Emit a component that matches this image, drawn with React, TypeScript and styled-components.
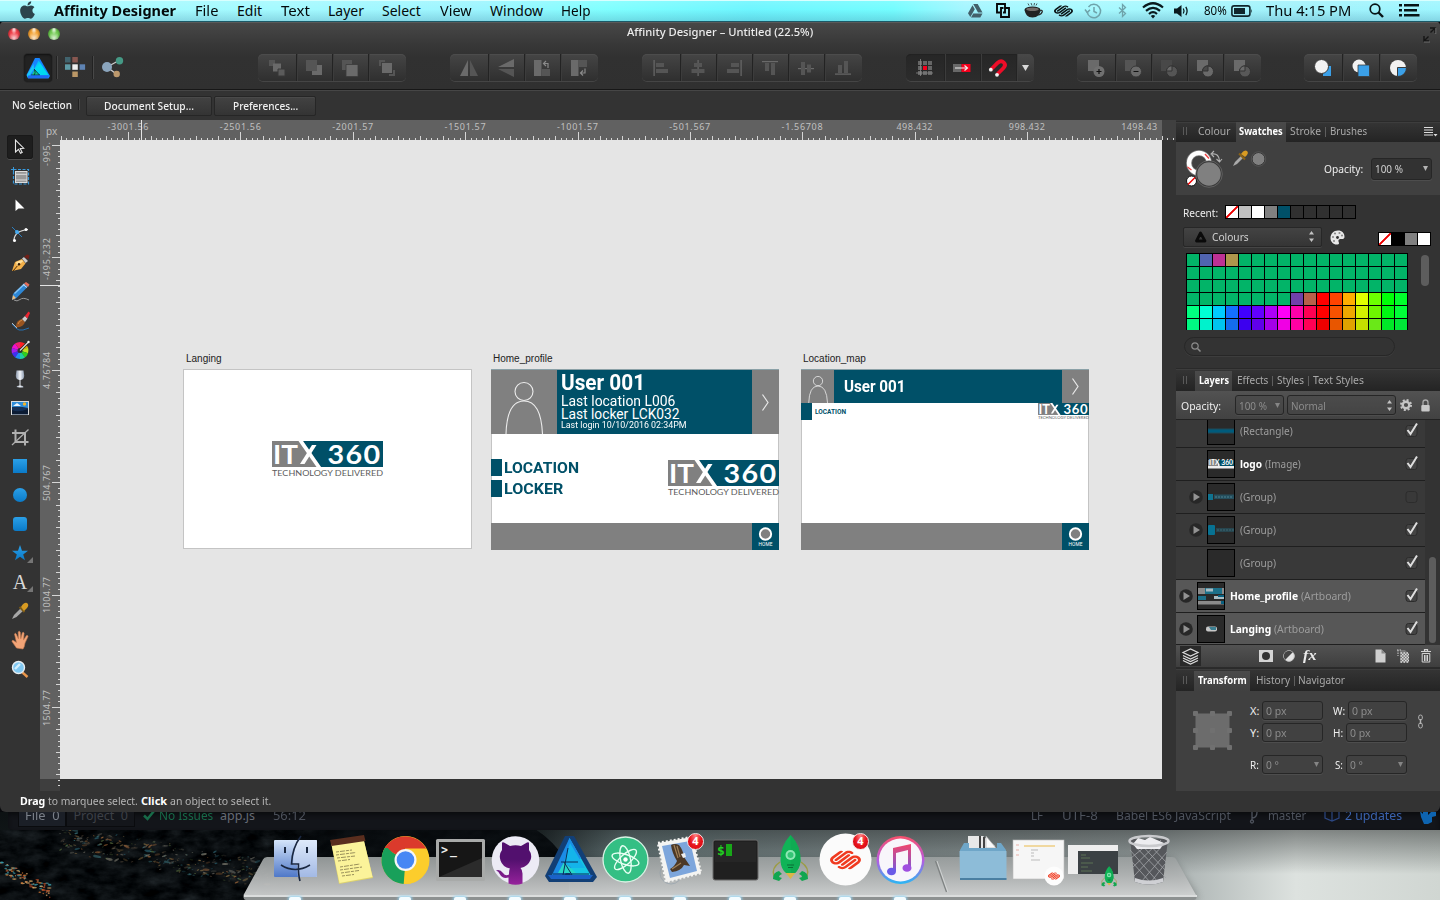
import React, { useLayoutEffect, useRef, useState } from "react";
import styled, { createGlobalStyle, css } from "styled-components";
import { SiSquarespace } from "react-icons/si";
import { FaApple } from "react-icons/fa";

const UI = `"Noto Sans", "Open Sans", sans-serif`;

const GlobalStyle = createGlobalStyle`
  * { box-sizing: border-box; }
  html, body { margin: 0; padding: 0; background: #111; }
  svg { display: block; flex: none; overflow: visible; }
`;

/* ---------- text fitted to a fixed measure ---------- */
const FitBox = styled.span<{ $w: number; $ml?: number }>`
  display: inline-block;
  flex: none;
  width: ${(p) => p.$w}px;
  margin-left: ${(p) => p.$ml ?? 0}px;
  white-space: pre;
  text-align: left;
`;
const FitInner = styled.span`
  display: inline-block;
  transform-origin: 0 50%;
`;
function Fit({ w, ml, children }: { w: number; ml?: number; children: React.ReactNode }) {
  const ref = useRef<HTMLSpanElement>(null);
  const [k, setK] = useState(1);
  useLayoutEffect(() => {
    if (ref.current) setK(w / ref.current.offsetWidth);
  }, [w]);
  return (
    <FitBox $w={w} $ml={ml}>
      <FitInner ref={ref} style={{ transform: `scaleX(${k})` }}>{children}</FitInner>
    </FitBox>
  );
}

/* ---------- page ---------- */
const Screen = styled.div`
  position: relative;
  width: 1440px;
  height: 900px;
  overflow: hidden;
  display: flex;
  flex-direction: column;
  background: #08090c;
  font-family: ${UI};
`;

/* ---------- menu bar ---------- */
const MenuBar = styled.header`
  height: 22px;
  flex: none;
  display: flex;
  align-items: center;
  padding-left: 19px;
  font-size: 14px;
  line-height: 20px;
  color: #04090b;
  border-bottom: 1px solid #1d5a68;
  box-shadow: inset 0 1px 0 #d8ffff;
  background:
    linear-gradient(180deg, rgba(255,255,255,.12), rgba(255,255,255,0) 45%, rgba(60,130,160,.28)),
    linear-gradient(90deg, #a6fbff 0, #a4faff 20%, #9df5ff 33%, #80ffff 42%, #6ef6ff 52%, #74fdff 62%, #a5f6ff 67%, #a8faff 75%, #a2f2fb 90%, #9ff6ff 100%);
`;
const MenuName = styled.span`font-weight: 700; display: flex;`;
const MenuGlyph = styled.span<{ $ml: number }>`margin-left: ${(p) => p.$ml}px; flex: none;`;
const BatteryText = styled.span`font-size: 12px; display: flex;`;

const menuItems: [string, number, number][] = [
  ["File", 23, 19], ["Edit", 25, 19], ["Text", 29, 19], ["Layer", 36, 18], ["Select", 39, 18],
  ["View", 32, 19], ["Window", 53, 18], ["Help", 30, 18],
];

const AppleMark = styled(FaApple)`
  width: 17px;
  height: 20px;
  margin-top: -1px;
  color: #2c444c;
`;
const SMark = styled(SiSquarespace).attrs({ preserveAspectRatio: "none" })<{ $w: number; $h: number }>`
  width: ${(p) => p.$w}px;
  height: ${(p) => p.$h}px;
`;

function Menus() {
  return (
    <MenuBar>
      <AppleMark />
      <MenuName><Fit w={122} ml={18}>Affinity Designer</Fit></MenuName>
      {menuItems.map(([t, w, ml]) => <Fit key={t} w={w} ml={ml}>{t}</Fit>)}
      <MenuGlyph $ml={377}>
        <svg width="15" height="14" viewBox="0 0 15 14"><path fill="#43606a" d="M5.200 0h4.500l4.800 8.500h-4.500zM4.500 1.300l2.300 4L2.300 13 0 9.200zM5.300 9.500h9.200L12.300 13.500H3z" /></svg>
      </MenuGlyph>
      <MenuGlyph $ml={13}>
        <svg width="14" height="15" viewBox="0 0 14 15" fill="none" stroke="#06090a" strokeWidth="1.900"><path d="M9 4.500V1H1v8.500h3M5 10.500V14h8V5H9.500M5 10.500V5h2.500M9 4.500v5H7" /></svg>
      </MenuGlyph>
      <MenuGlyph $ml={14}>
        <svg width="19" height="16" viewBox="0 0 19 16"><path d="M4 .5l1 2M7 0l1 2.500M10.500 0l-.5 2.500M13 .5l-1 2" stroke="#37474b" strokeWidth=".9" /><ellipse cx="8.500" cy="6.500" rx="8" ry="3" fill="#1a1c1d" /><path d="M.5 7c1 4.500 3 7.500 8 7.500S16 11.500 16.500 7z" fill="#222" /><ellipse cx="8.500" cy="6.300" rx="6.300" ry="1.800" fill="#746d6a" /><path d="M15.500 8q3-1.500 2.800.7-.6 2.600-4 3.300" fill="none" stroke="#2b2b2b" strokeWidth="1.300" /></svg>
      </MenuGlyph>
      <MenuGlyph $ml={11}><SMark $w={19} $h={14} color="#0b1416" /></MenuGlyph>
      <MenuGlyph $ml={12}>
        <svg width="17" height="16" viewBox="0 0 17 16" fill="none" stroke="#6fa3aa" strokeWidth="1.500"><path d="M2.200 9A6.700 6.700 0 1 0 3.500 4" /><path d="M9 4v4.500l3 1.500" /><path d="M0 6.500l2.300 3 2.700-2.700" /></svg>
      </MenuGlyph>
      <MenuGlyph $ml={16}>
        <svg width="9" height="15" viewBox="0 0 9 15" fill="none" stroke="#6fa3aa" strokeWidth="1.300"><path d="M1 4.500l6.500 6L4.500 13.500V1.500l3 3L1 10.500" /></svg>
      </MenuGlyph>
      <MenuGlyph $ml={15}>
        <svg width="22" height="17" viewBox="0 0 22 17" fill="none" stroke="#0a1a1e" strokeWidth="2.200"><path d="M1 5.500Q11-3 21 5.500M4 8.800q7-6 14 0M7 12q4-3.600 8 0" /><path d="M11 16.500L8.800 14q2.200-1.800 4.400 0z" fill="#0a1a1e" stroke="none" /></svg>
      </MenuGlyph>
      <MenuGlyph $ml={10}>
        <svg width="15" height="14" viewBox="0 0 15 14"><path d="M0 4.500h3L7.500 1v12L3 9.500H0z" fill="#0a1a1e" /><path d="M9.300 4.500q1.500 2.500 0 5M11.800 2.800q2.600 4.200 0 8.400" fill="none" stroke="#0a1a1e" strokeWidth="1.300" /></svg>
      </MenuGlyph>
      <BatteryText><Fit w={23} ml={15}>80%</Fit></BatteryText>
      <MenuGlyph $ml={4}>
        <svg width="22" height="12" viewBox="0 0 22 12"><rect x=".9" y=".9" width="18" height="10.200" rx="2.200" fill="none" stroke="#10262b" strokeWidth="1.600" /><rect x="3" y="3" width="11" height="6" fill="#10262b" /><path d="M20.300 3.700q1.600 2.300 0 4.600z" fill="#10262b" /></svg>
      </MenuGlyph>
      <Fit w={85} ml={13}>Thu 4:15 PM</Fit>
      <MenuGlyph $ml={18}>
        <svg width="15" height="15" viewBox="0 0 15 15" fill="none" stroke="#081417"><circle cx="6" cy="6" r="4.800" strokeWidth="1.700" /><path d="M9.500 9.500L14 14" strokeWidth="2.400" /></svg>
      </MenuGlyph>
      <MenuGlyph $ml={15}>
        <svg width="21" height="13" viewBox="0 0 21 13" fill="#081417"><path d="M0 0h3v2.600H0zM5 0h15v2.600H5zM0 5h3v2.600H0zM5 5h13v2.600H5zM0 10h3v2.600H0zM5 10h15.500v2.600H5z" /></svg>
      </MenuGlyph>
    </MenuBar>
  );
}

/* ---------- window ---------- */
const Window = styled.section`
  position: relative;
  z-index: 2;
  flex: none;
  height: 790px;
  width: 1440px;
  display: flex;
  flex-direction: column;
  overflow: hidden;
  border-radius: 4px 4px 6px 6px;
  background: #333;
  color: #eee;
  font-size: 11px;
`;
const TitleBar = styled.div`
  height: 22px;
  flex: none;
  display: flex;
  align-items: center;
  padding: 2px 4px 0 8px;
  background: linear-gradient(#484848, #383838);
  box-shadow: inset 0 1px 0 #5a5a5a;
  font-size: 11.500px;
  font-weight: 500;
  color: #ececec;
`;
const TitleText = styled.span`display: flex; padding-bottom: 5px;`;
const Lights = styled.div`display: flex; gap: 8px; width: 619px;`;
const Light = styled.i<{ $c: string; $d: string }>`
  width: 12px;
  height: 12px;
  border-radius: 50%;
  background: radial-gradient(circle at 50% 85%, rgba(255,255,255,.75), transparent 50%), radial-gradient(ellipse at 50% 12%, rgba(255,255,255,.9), transparent 34%), radial-gradient(circle, ${(p) => p.$c} 40%, ${(p) => p.$d});
`;
const FullScreen = styled.span`margin-left: 610px;`;

const Toolbar = styled.div`
  height: 45px;
  flex: none;
  display: flex;
  align-items: center;
  padding: 2px 0 0 24px;
  background: linear-gradient(#383838, #313131 30%, #303030);
`;
const Persona = styled.div<{ $on?: boolean; $w: number }>`
  width: ${(p) => p.$w}px;
  height: 28px;
  border-radius: 4px;
  display: flex;
  align-items: center;
  justify-content: center;
  ${(p) => p.$on && css`background: #222; box-shadow: inset 0 1px 2px #111, 0 0 0 1px #2a2a2a;`}
`;
const VLine = styled.i<{ $l: number; $r?: number; $h: number }>`
  width: 2px;
  height: ${(p) => p.$h}px;
  margin: 0 ${(p) => p.$r ?? 0}px 0 ${(p) => p.$l}px;
  background: linear-gradient(90deg, #222 50%, #484848 50%);
`;
const Group = styled.div<{ $ml: number; $dark?: boolean }>`
  height: 27px;
  margin-left: ${(p) => p.$ml}px;
  display: flex;
  border-radius: 5px;
  background: ${(p) => (p.$dark ? "linear-gradient(#262626,#2c2c2c)" : "linear-gradient(#454545,#2f2f2f)")};
  box-shadow: 0 1px 0 #454545, inset 0 1px 0 ${(p) => (p.$dark ? "#222" : "#4c4c4c")};
  overflow: hidden;
`;
const GBtn = styled.div<{ $w: number; $light?: boolean }>`
  width: ${(p) => p.$w}px;
  height: 27px;
  display: flex;
  align-items: center;
  justify-content: center;
  & + & { box-shadow: inset 1px 0 0 #232323, inset 2px 0 0 #3c3c3c; }
  ${(p) => p.$light && css`background: linear-gradient(#484848, #333);`}
`;

const G = "#6a6a6a";
const D = "#555";
const I = ({ children, w = 18 }: { children: React.ReactNode; w?: number }) => (
  <svg width={w} height="18" viewBox={`0 0 ${w} 18`}>{children}</svg>
);
const R = ({ x, y, w, h, f = G }: { x: number; y: number; w: number; h: number; f?: string }) => (
  <rect x={x} y={y} width={w} height={h} fill={f} />
);

function Tools() {
  return (
    <Toolbar>
      <Persona $on $w={28}>
        <svg width="24" height="22" viewBox="0 0 24 22">
          <defs><linearGradient id="af" x1="0" y1="0" x2="1" y2="1"><stop offset="0" stopColor="#1690ff" /><stop offset=".35" stopColor="#00dcf4" /><stop offset="1" stopColor="#00d8ee" /></linearGradient></defs>
          <path d="M9 1h4.500L24 19l-1.500 2.500H2L.5 18z" fill="#1784ff" />
          <path d="M7.500 7L.8 18l1.200 3 6-9z" fill="#19c8f8" />
          <path d="M12.500 3.500L22.500 18H13.500L8 12.500z" fill="url(#af)" />
          <path d="M8.500 12.500l4.500 5.500H6z" fill="#12cf8e" />
          <path d="M8 12l5.500 6M5 18h9M8.500 12.500Q10 16 8 18.500" fill="none" stroke="#0c2a33" strokeWidth=".8" />
          <path d="M2 18.500h20.500l-1 2.500H2z" fill="#1f6cf4" />
        </svg>
      </Persona>
      <VLine $l={4} $h={23} />
      <Persona $w={34}>
        <svg width="21" height="21" viewBox="0 0 21 21">
          <R x={0} y={0} w={5.500} h={5.500} f="#41636d" /><R x={7.300} y={0} w={5.500} h={5.500} f="#885750" />
          <R x={0} y={7.300} w={5.500} h={5.500} f="#5e9aa5" /><R x={7.300} y={7.300} w={5.500} h={5.500} f="#efefef" /><R x={14.600} y={7.300} w={5.500} h={5.500} f="#5e83b3" />
          <R x={7.300} y={14.500} w={5.500} h={5.500} f="#ba9767" />
        </svg>
      </Persona>
      <VLine $l={0} $h={23} />
      <Persona $w={37}>
        <svg width="22" height="21" viewBox="0 0 22 21"><path d="M5 10L17 3.500M5 10l10 7.500" stroke="#c9c9c9" strokeWidth="1.400" /><circle cx="5" cy="10" r="5" fill="#8ba5bd" /><circle cx="17.500" cy="3.700" r="3.700" fill="#459985" /><circle cx="14.700" cy="17" r="3.200" fill="#bc986c" /></svg>
      </Persona>
      <Group $ml={127}>
        <GBtn $w={38}><I><R x={1} y={1} w={6} h={6} f={D} /><R x={5} y={4.500} w={8} h={8} /><path d="M10 10h7v7h-7z" fill="#5b5b5b" stroke="#383838" /></I></GBtn>
        <GBtn $w={36}><I><path d="M7 12h3v-6h7v10H7z" fill={G} /><R x={1} y={1} w={11} h={11} f={D} /></I></GBtn>
        <GBtn $w={36}><I><R x={1} y={1} w={10} h={10} f={D} /><path d="M5 5.500h12v12H5z" fill={G} stroke="#3a3a3a" strokeWidth=".8" /></I></GBtn>
        <GBtn $w={38}><I><path d="M1 1h6v2H3v4H1zM17 17h-6v-2h4v-4h2z" fill={D} /><R x={4} y={4} w={10} h={10} /></I></GBtn>
      </Group>
      <Group $ml={44}>
        <GBtn $w={38}><I w={20}><path d="M9 1v16H1z" fill={G} /><path d="M11 1v16h8z" fill={D} /></I></GBtn>
        <GBtn $w={36}><I><path d="M17 0v8H1z" fill={G} /><path d="M17 10v8L1 10z" fill={D} /></I></GBtn>
        <GBtn $w={36}><I><R x={1} y={1} w={7.500} h={16} /><R x={9} y={10} w={8} h={7} f={D} /><path d="M11 4.500h4V9M13 2l-2.500 2.500L13 7" fill="none" stroke="#8a8a8a" strokeWidth="1.200" /></I></GBtn>
        <GBtn $w={38}><I><R x={1} y={1} w={7.500} h={16} /><R x={9} y={1} w={8} h={7} f={D} /><path d="M15 9.500V14h-4M13 11.500L10.500 14 13 16.500" fill="none" stroke="#8a8a8a" strokeWidth="1.200" /></I></GBtn>
      </Group>
      <Group $ml={44}>
        <GBtn $w={38}><I><R x={1.500} y={1} w={1.200} h={16} /><R x={4} y={4} w={8} h={4} f={D} /><R x={4} y={10} w={12} h={4} f={D} /></I></GBtn>
        <GBtn $w={36}><I><R x={8.500} y={1} w={1.200} h={16} /><R x={5} y={4} w={8} h={4} f={D} /><R x={2.500} y={10} w={13} h={4} f={D} /></I></GBtn>
        <GBtn $w={36}><I><R x={15.500} y={1} w={1.200} h={16} /><R x={6} y={4} w={8} h={4} f={D} /><R x={2} y={10} w={12} h={4} f={D} /></I></GBtn>
        <GBtn $w={36}><I><R x={1} y={2} w={16} h={1.200} /><R x={4} y={4} w={4} h={8} f={D} /><R x={10} y={4} w={4} h={12} f={D} /></I></GBtn>
        <GBtn $w={36}><I><R x={1} y={9} w={16} h={1.200} /><R x={4} y={3} w={4} h={13} f={D} /><R x={10} y={5.500} w={4} h={8} f={D} /></I></GBtn>
        <GBtn $w={38}><I><R x={1} y={14.500} w={16} h={1.200} /><R x={4} y={6} w={4} h={8} f={D} /><R x={10} y={2} w={4} h={12} f={D} /></I></GBtn>
      </Group>
      <Group $ml={44} $dark>
        <GBtn $w={38}><I>{[2, 7, 12].map((y) => [2, 7, 12].map((x) => <R key={x + "-" + y} x={x} y={y} w={4} h={4} f={x === 7 && y === 7 ? "#f4001c" : "#666"} />))}<path d="M4.500 0v17M0 14h17" stroke="#888" strokeWidth=".8" /></I></GBtn>
        <GBtn $w={36}><I><R x={0} y={5} w={8.500} h={8} f="#686868" /><R x={8.500} y={5} w={9} h={8} f="#f4001c" /><path d="M2 9h12M11.500 6.500L14.500 9l-3 2.500" stroke="#eee" fill="none" strokeWidth="1.200" /></I></GBtn>
        <GBtn $w={36}><I><path d="M2 10.500L8.500 4Q12 .9 14.700 3.300T14.500 9L8.500 15" fill="none" stroke="#ee0d28" strokeWidth="3.800" /><circle cx="1.800" cy="10.700" r="1.900" fill="#f2f2f2" /><circle cx="8" cy="15.800" r="1.900" fill="#f2f2f2" /></I></GBtn>
        <GBtn $w={18} $light><svg width="7" height="6" viewBox="0 0 7 6"><path d="M0 0h7L3.500 6z" fill="#d8d8d8" /></svg></GBtn>
      </Group>
      <Group $ml={43}>
        <GBtn $w={38}><I><R x={1} y={1} w={11} h={11} /><circle cx="12" cy="12.500" r="5.500" fill="#707070" /><path d="M12 10v5M9.500 12.500h5" stroke="#111" strokeWidth="1.200" /></I></GBtn>
        <GBtn $w={36}><I><R x={1} y={1} w={11} h={11} f={D} /><circle cx="12" cy="12.500" r="5.500" fill={G} stroke="#383838" /><path d="M9.500 12.500h5" stroke="#111" strokeWidth="1.200" /></I></GBtn>
        <GBtn $w={36}><I><R x={1} y={1} w={11} h={11} f="#484848" /><circle cx="12" cy="12.500" r="5.500" fill={D} stroke="#333" /><path d="M12 6.800V12H6.500A5.300 5.300 0 0 1 12 6.800z" fill={G} stroke="#333" /></I></GBtn>
        <GBtn $w={36}><I><R x={1} y={1} w={11} h={11} /><circle cx="12" cy="12.500" r="5.500" fill={G} stroke="#333" /><path d="M12 6.800V12H6.500A5.300 5.300 0 0 1 12 6.800z" fill="#484848" stroke="#333" /></I></GBtn>
        <GBtn $w={38}><I><R x={1} y={1} w={11} h={11} /><circle cx="12" cy="12.500" r="5.500" fill="#585858" stroke="#333" /><path d="M12 6.800V12H6.500A5.300 5.300 0 0 1 12 6.800z" fill={G} stroke="#333" /></I></GBtn>
      </Group>
      <Group $ml={43}>
        <GBtn $w={38}><I><R x={9} y={7} w={8} h={10} f="#3ba0e8" /><circle cx="7.500" cy="7.500" r="7" fill="#f2f2f2" stroke="#3a3a3a" /></I></GBtn>
        <GBtn $w={37}><I><circle cx="7" cy="7" r="6.500" fill="#f2f2f2" /><path d="M6 6h11.500v11.500H6z" fill="#3ba0e8" stroke="#3a3a3a" strokeWidth=".8" /></I></GBtn>
        <GBtn $w={38}><I><circle cx="9" cy="9" r="8" fill="#f2f2f2" /><path d="M8.500 8.500H17.500A8.500 8.500 0 0 1 8.500 17.500z" fill="#3ba0e8" stroke="#3a3a3a" /></I></GBtn>
      </Group>
    </Toolbar>
  );
}

const ContextBar = styled.div`
  height: 31px;
  flex: none;
  display: flex;
  align-items: center;
  padding: 0 0 2px 12px;
  border-top: 1px solid #171717;
  box-shadow: inset 0 1px 0 #464646;
  color: #f0f0f0;
  font-weight: 500;
`;
const ContextBtn = styled.div<{ $w: number; $ml: number }>`
  width: ${(p) => p.$w}px;
  margin-left: ${(p) => p.$ml}px;
  height: 20px;
  margin-top: 3px;
  padding-bottom: 1px;
  display: flex;
  align-items: center;
  justify-content: center;
  border: 1px solid #262626;
  border-radius: 2px;
  background: linear-gradient(#424242, #343434);
  box-shadow: inset 0 1px 0 #4a4a4a;
`;

/* ---------- workspace ---------- */
const Work = styled.div`display: flex; height: 671px; flex: none;`;
const ToolCol = styled.div`
  width: 40px;
  flex: none;
  display: flex;
  flex-direction: column;
  align-items: center;
  padding-top: 13px;
`;
const Tool = styled.div<{ $on?: boolean }>`
  width: 26px;
  height: 24px;
  margin: 2px 0 3px;
  display: flex;
  align-items: center;
  justify-content: center;
  border-radius: 3px;
  ${(p) => p.$on && css`background: #1e1e1e; box-shadow: inset 0 0 0 1px #191919, 0 1px 0 #505050;`}
`;
const T = ({ children }: { children: React.ReactNode }) => <svg width="26" height="24" viewBox="0 0 26 24">{children}</svg>;
const Corner = () => <path d="M26 16v6h-6z" fill="#757575" />;

const toolIcons: React.ReactNode[] = [
  <T><path d="M8.500 5v12l3-2.700 2 4 1.700-.9-2-3.900 3.500-.3z" fill="#1c1c1c" stroke="#e8e8e8" strokeWidth="1.100" /></T>,
  <T><rect x="6.500" y="5.500" width="15" height="14.500" fill="none" stroke="#389ade" strokeWidth="1.200" strokeDasharray="3 1.500" /><path d="M6.500 3v5M4 5.500h5" stroke="#389ade" /><rect x="8.500" y="7.500" width="11.500" height="11" fill="#999" stroke="#ddd" /><path d="M8 10.300h12M8 16h12" stroke="#ddd" /></T>,
  <T><path d="M8.500 6.500v11.500l3-2.500h6z" fill="#fff" /></T>,
  <T><path d="M7 18Q7.500 9 21 7.500" fill="none" stroke="#ddd" strokeWidth="1.200" /><path d="M5 5l10 10" stroke="#2c7fc0" /><circle cx="10" cy="10" r="2" fill="#46a9ee" /><circle cx="7.500" cy="18.500" r="1.500" fill="#fff" /><circle cx="19" cy="7.500" r="1.500" fill="#fff" /></T>,
  <T><path d="M5 20l3-9 7-3 3.500 4.500L14 18z" fill="#f3b04a" /><path d="M6 20l6-7" stroke="#522c00" /><path d="M9 11l6-2 1 1.500L10 15z" fill="#ffdf9a" /><circle cx="12" cy="13.300" r="1.200" fill="#331a00" /><path d="M15 7.500l2-1.500 4 4-2.500 2z" fill="#ccc" /><path d="M17 6l3-2.500 2.500.8-1 4z" fill="#702018" /></T>,
  <T><path d="M6 14L17 3.500l4 3L9.500 18 5 20z" fill="#2d86d4" /><path d="M7.500 13.500L17.500 4" stroke="#83c3f5" strokeWidth="1.500" /><path d="M17 3.500l2-1.500 3.500 2.500L21 7z" fill="#e36c57" /><path d="M16 4.500l4 3" stroke="#ddd" /><path d="M5 20l1-5 3 3z" fill="#f0bd7c" /><path d="M7 20q3 2 6-.5t9 .5" fill="none" stroke="#999" /></T>,
  <T><path d="M5 15q4 5 7 6t10-2" fill="none" stroke="#2770b0" /><path d="M5 14l5 5" stroke="#bbb" /><path d="M9 18q0-7 6-8l3 3q-2 6-9 5z" fill="#9a5520" /><path d="M11 15q1-3 4-4" stroke="#d38b45" fill="none" /><path d="M15 10l3-3 2.500 2.500L18 13z" fill="#ccc" /><path d="M18 7l3.500-4.500L23 4l-2.500 5.500z" fill="#ee2431" /></T>,
  <T>{["#ff2020", "#e0b000", "#c0e020", "#30d020", "#20d0a0", "#2090f0", "#4030f0", "#a020f0", "#f010d0", "#f02070"].map((c, i) => { const a = (i * 36 - 90) * Math.PI / 180, b = ((i + 1) * 36 - 89) * Math.PI / 180; return <path key={c} fill={c} d={`M13 12.500L${13 + 8.500 * Math.cos(a)} ${12.500 + 8.500 * Math.sin(a)}A8.500 8.500 0 0 1 ${13 + 8.500 * Math.cos(b)} ${12.500 + 8.500 * Math.sin(b)}z`} />; })}<circle cx="13" cy="12.500" r="2.500" fill="#333" /><path d="M13 12.500l8-8" stroke="#222" strokeWidth="3" /><path d="M13 12.500l8-8" stroke="#ddd" strokeWidth="1.200" /><circle cx="21.500" cy="4" r="1.200" fill="#eee" /></T>,
  <T><defs><linearGradient id="gl"><stop offset="0" stopColor="#8794a8" /><stop offset=".5" stopColor="#f3f6fb" /><stop offset="1" stopColor="#8d9bb0" /></linearGradient></defs><path d="M9.500 3.500h7l.7 5q0 4-3.700 4.500v5.500q3 .3 3 1.500t-7 0q0-1.200 3-1.500V13Q8.800 12.500 8.800 8.500z" fill="url(#gl)" /></T>,
  <T><rect x="4.500" y="5.500" width="17" height="13" fill="#2f8edb" stroke="#ddd" /><path d="M5 11q8-1 16 1v6.500H5z" fill="#163055" /><path d="M5 14q6 3 16-1v5H5z" fill="#0c1c34" /><path d="M6 10l4-3 4 3z" fill="#e8f4ff" /><circle cx="17.500" cy="8" r="1.700" fill="#f5b52a" /></T>,
  <T><path d="M8.500 4.500V17h13M5 8h13v12.500" fill="none" stroke="#b0b0b0" strokeWidth="2" /><path d="M5 20L21.500 4.500" stroke="#b0b0b0" strokeWidth="1.200" /></T>,
  <T><defs><linearGradient id="bl" x1="0" y1="0" x2="0" y2="1"><stop offset="0" stopColor="#2ba0e8" /><stop offset="1" stopColor="#0a7ac8" /></linearGradient></defs><rect x="6" y="5" width="14" height="14" fill="url(#bl)" /></T>,
  <T><circle cx="13" cy="12" r="7" fill="url(#bl)" /></T>,
  <T><rect x="6" y="5" width="14" height="14" rx="3" fill="url(#bl)" /></T>,
  <T><path d="M13 4l2 5.800h6l-4.800 3.600 1.800 5.900-5-3.600-5 3.600 1.800-5.900L5 9.800h6z" fill="url(#bl)" /><Corner /></T>,
  <T><text x="13" y="19" fontFamily="Liberation Serif" fontSize="20" textAnchor="middle" fill="#d8d8d8">A</text><Corner /></T>,
  <T><path d="M5 20l2-4 7-7 2.500 2.500-7 6.500z" fill="#a8a8a8" /><path d="M12.500 8l5 5" stroke="#7c5a16" strokeWidth="2" /><path d="M14 8q3-5 6-4 2.500 2 0 5l-3 3z" fill="#d89b22" /></T>,
  <T><path d="M9.500 20L5 13.500q0-1.700 1.500-1l3 2L7.500 6q.8-1.500 1.700 0L11.500 11 11.200 4q1-1.700 2 0l.6 6.800 1.500-6q1.200-1.200 1.800.3l-.6 7 3-4.500q1.500-.7 1.500 1L18 15q-.5 4-2 6z" fill="#f2a477" stroke="#c97c50" strokeWidth=".6" /></T>,
  <T><path d="M15.500 15.500l5 4.500" stroke="#e8964c" strokeWidth="2.400" /><circle cx="11.500" cy="10.500" r="6" fill="#80c8f2" stroke="#e8eef2" strokeWidth="1.400" /><path d="M8 12l5-5" stroke="#d4effd" strokeWidth="2.400" /></T>,
];

const CanvasCol = styled.div`display: flex; flex-direction: column; width: 1136px; flex: none;`;
const HRow = styled.div`display: flex; height: 20px; flex: none; background: linear-gradient(90deg, #616161 1122px, #404040 1122px);`;
const RulerUnit = styled.div`
  width: 20px;
  padding: 4px 0 0 6px;
  font: 10px/14px ${UI};
  color: #bdbdbd;
`;
const VRow = styled.div`display: flex; flex: none; height: 639px;`;
const VRuler = styled.div`width: 20px; flex: none; height: 651px; background: linear-gradient(#616161 639px, #3e3e3e 639px);`;
const Canvas = styled.div`position: relative; width: 1102px; height: 639px; flex: none; background: #e5e5e5;`;

function tickPath(start: number, end: number, origin: number, vertical: boolean) {
  let d = "";
  const step = 112.350 / 20;
  for (let i = -40; i < 240; i++) {
    const p = Math.floor(origin + i * step) + 0.5;
    if (p < start || p > end) continue;
    const len = i % 20 === 0 ? 8 : i % 4 === 0 ? 4 : 2;
    d += vertical ? `M20 ${p}h-${len}` : `M${p} 20v-${len}`;
  }
  return d;
}
const hLabels = ["-3001.56", "-2501.56", "-2001.57", "-1501.57", "-1001.57", "-501.567", "-1.56708", "498.432", "998.432", "1498.43"];
const vLabels: [string, number, number][] = [["-495.232", 280, 42], ["4.76784", 389, 37], ["504.767", 501, 36], ["1004.77", 613, 36], ["1504.77", 726, 36]];

function HRuler() {
  return (
    <svg width="1116" height="20" viewBox="0 0 1116 20">
      <path d={tickPath(0, 1116, 68.600, false)} stroke="#d6d6d6" />
      {hLabels.map((t, i) => (
        <text key={t} x={68 + i * 112.350} y="10" textAnchor="middle" textLength={t[0] === "-" ? 41 : 36} fontFamily="Noto Sans" fontSize="9" fill="#c0c0c0">{t}</text>
      ))}
      <path d="M81.500 0v20" stroke="#e4e4e4" />
    </svg>
  );
}
function VRulerMarks() {
  return (
    <svg width="20" height="651" viewBox="0 0 20 651">
      <path d={tickPath(0, 651, 5.600, true)} stroke="#d6d6d6" />
      <text transform="translate(10 26) rotate(-90)" textLength="24" fontFamily="Noto Sans" fontSize="9" fill="#c0c0c0">-995.</text>
      {vLabels.map(([t, y, l]) => (
        <text key={t} transform={`translate(10 ${y - 140}) rotate(-90)`} textLength={l} fontFamily="Noto Sans" fontSize="9" fill="#c0c0c0">{t}</text>
      ))}
      <path d="M0 145.500h20" stroke="#e4e4e4" />
    </svg>
  );
}

/* ---------- artboards ---------- */
const Artboard = styled.div<{ $x: number; $y: number; $w?: number; $h?: number }>`
  position: absolute;
  left: ${(p) => p.$x}px;
  top: ${(p) => p.$y}px;
  width: ${(p) => p.$w ?? 288}px;
  height: ${(p) => p.$h ?? 181}px;
  border: 1px solid #c4c4c4;
  background: #fff;
  display: flex;
  flex-direction: column;
  font-family: Roboto, sans-serif;
`;
const BoardLabel = styled.div<{ $l?: number }>`
  position: absolute;
  left: ${(p) => p.$l ?? 1}px;
  top: -18px;
  font: 10px/14px "Liberation Sans", Arial, sans-serif;
  color: #222;
`;
const TEAL = "#005068";
const BoardHead = styled.div<{ $h: number }>`display: flex; height: ${(p) => p.$h}px; margin: -1px -1px 0; flex: none; background: #808080; border-top: 1px solid #8ba1a7;`;
const HeadCell = styled.div<{ $w: number; $teal?: boolean; $pl?: number }>`
  width: ${(p) => p.$w}px;
  padding-left: ${(p) => p.$pl ?? 0}px;
  background: ${(p) => (p.$teal ? TEAL : "#808080")};
  color: #fff;
  display: flex;
  flex-direction: column;
`;
const Line = styled.div<{ $size: number; $lh: number; $bold?: boolean }>`
  font-size: ${(p) => p.$size}px;
  line-height: ${(p) => p.$lh}px;
  height: ${(p) => p.$lh}px;
  font-weight: ${(p) => (p.$bold ? 700 : 400)};
`;
const BoardMain = styled.div`flex: 1; display: flex; justify-content: space-between; margin: 0 -1px; min-height: 0;`;
const Links = styled.div<{ $pt: number }>`padding-top: ${(p) => p.$pt}px; display: flex; flex-direction: column; gap: 4px;`;
const LinkRow = styled.div<{ $size: number }>`display: flex; align-items: center; height: 17px; color: ${TEAL}; font-weight: 700; font-size: ${(p) => p.$size}px;`;
const LinkMark = styled.i`width: 11px; height: 17px; background: ${TEAL};`;
const BoardFoot = styled.div`height: 27px; margin: 0 -1px -1px; flex: none; background: #808080; display: flex; justify-content: flex-end;`;
const HomeBtn = styled.div`width: 27px; background: ${TEAL}; display: flex;`;
const Centered = styled.div`padding: 71px 0 0 88px;`;
const LogoSlot = styled.div<{ $pt: number }>`padding-top: ${(p) => p.$pt}px;`;

const Logo = ({ w }: { w: number }) => (
  <svg width={w} height={(w * 36) / 111} viewBox="0 0 111 36" fontFamily="Lato, sans-serif">
    <rect width="111" height="26" fill="#808080" />
    <path d="M31 0h80v26H49z" fill={TEAL} />
    <path d="M26.500 0h4.500l18 26h-4.500z" fill="#fff" />
    <path d="M44.500 4h-4.500L28 23h4.500z" fill="#fff" />
    <g fill="#fff" fontWeight="700" fontSize="27">
      <text x="1" y="23" textLength="25" lengthAdjust="spacingAndGlyphs">IT</text>
      <text x="55.500" y="23" textLength="54" lengthAdjust="spacingAndGlyphs" letterSpacing="1.300">360</text>
    </g>
    <text x="0" y="34.700" fontSize="8" fill="#5c5c5c" textLength="111" lengthAdjust="spacingAndGlyphs">TECHNOLOGY DELIVERED</text>
  </svg>
);
const Person = ({ k }: { k: number }) => (
  <svg width={66 * k} height={64 * k} viewBox="0 0 66 64" fill="none" stroke="#ececec" strokeWidth={1.100 / Math.sqrt(k)}>
    <circle cx="33" cy="21.500" r="9" /><path d="M15 64Q16 31 33 31T51.500 64" />
  </svg>
);
const Chevron = ({ h }: { h: number }) => (
  <svg width="27" height={h} viewBox={`0 0 27 ${h}`} fill="none" stroke="#e8e8e8" strokeWidth="1.200"><path d={`M10.500 ${h / 2 - 8}l5.500 8-5.500 8`} /></svg>
);
const Foot = () => (
  <BoardFoot>
    <HomeBtn>
      <svg width="27" height="27" viewBox="0 0 27 27"><circle cx="13.500" cy="11" r="5.700" fill="#808080" stroke="#fff" strokeWidth="1.900" /><text x="6.500" y="23" textLength="14" fontFamily="Roboto" fontSize="4.800" fill="#fff">HOME</text></svg>
    </HomeBtn>
  </BoardFoot>
);

function Boards() {
  return (
    <Canvas>
      <Artboard $x={123} $y={229} $w={289} $h={180}><BoardLabel $l={2}>Langing</BoardLabel><Centered><Logo w={111} /></Centered></Artboard>
      <Artboard $x={431} $y={229}>
        <BoardLabel>Home_profile</BoardLabel>
        <BoardHead $h={65}>
          <HeadCell $w={66}><Person k={1} /></HeadCell>
          <HeadCell $w={195} $teal $pl={4}>
            <Line $size={21.500} $lh={25} $bold><Fit w={84}>User 001</Fit></Line>
            <Line $size={13.800} $lh={13}><Fit w={114}>Last location L006</Fit></Line>
            <Line $size={13.800} $lh={12}><Fit w={119}>Last locker LCK032</Fit></Line>
            <Line $size={8.800} $lh={11}><Fit w={126}>Last login 10/10/2016 02:34PM</Fit></Line>
          </HeadCell>
          <HeadCell $w={27}><Chevron h={65} /></HeadCell>
        </BoardHead>
        <BoardMain>
          <Links $pt={25}>
            <LinkRow $size={15.500}><LinkMark /><Fit w={75} ml={2}>LOCATION</Fit></LinkRow>
            <LinkRow $size={15.500}><LinkMark /><Fit w={59} ml={2}>LOCKER</Fit></LinkRow>
          </Links>
          <LogoSlot $pt={26}><Logo w={111} /></LogoSlot>
        </BoardMain>
        <Foot />
      </Artboard>
      <Artboard $x={741} $y={229}>
        <BoardLabel>Location_map</BoardLabel>
        <BoardHead $h={34}>
          <HeadCell $w={33}><Person k={0.515} /></HeadCell>
          <HeadCell $w={228} $teal $pl={10}><Line $size={15.700} $lh={34} $bold><Fit w={62}>User 001</Fit></Line></HeadCell>
          <HeadCell $w={27}><Chevron h={33} /></HeadCell>
        </BoardHead>
        <BoardMain>
          <Links $pt={0}><LinkRow $size={6.500}><LinkMark /><Fit w={31} ml={3}>LOCATION</Fit></LinkRow></Links>
          <LogoSlot $pt={0}><Logo w={51} /></LogoSlot>
        </BoardMain>
        <Foot />
      </Artboard>
    </Canvas>
  );
}

/* ---------- right panels ---------- */
const Side = styled.aside`width: 264px; flex: none; display: flex; flex-direction: column; padding-top: 2px;`;
const Tabs = styled.div<{ $mt?: number; $pt?: number }>`
  height: ${(p) => 20 + (p.$pt ?? 0)}px;
  padding-top: ${(p) => p.$pt ?? 0}px;
  margin-top: ${(p) => p.$mt ?? 0}px;
  flex: none;
  display: flex;
  align-items: stretch;
  line-height: 17px;
  background: linear-gradient(#353535, #242424);
  color: #a9a9a9;
  box-shadow: 0 -1px 0 #2a2a2a, inset 0 1px 0 #3d3d3d;
`;
const Grip = styled.i<{ $r: number }>`
  width: 4px;
  height: 8px;
  margin: 5px ${(p) => p.$r}px 0 7px;
  border: solid #5a5a5a;
  border-width: 0 1px;
`;
const ActiveTab = styled.div<{ $w: number }>`
  width: ${(p) => p.$w}px;
  background: linear-gradient(#4a4a4a, #404040);
  color: #fff;
  font-weight: 700;
  display: flex;
  justify-content: center;
`;
const TabSep = styled.i<{ $l: number; $r: number }>`width: 1px; height: 10px; margin: 5px ${(p) => p.$r}px 0 ${(p) => p.$l}px; background: #5e5e5e;`;
const ColourHead = styled.div`height: 53px; flex: none; background: #404040; display: flex; align-items: center; padding-left: 9px;`;
const Field = styled.div<{ $w: number; $h?: number; $dim?: boolean; $ml?: number }>`
  width: ${(p) => p.$w}px;
  height: ${(p) => p.$h ?? 20}px;
  margin-left: ${(p) => p.$ml ?? 0}px;
  padding: 0 3px;
  display: flex;
  align-items: center;
  justify-content: space-between;
  border: 1px solid #262626;
  border-radius: 3px;
  background: ${(p) => (p.$dim ? "rgba(70,70,70,.35)" : "#323232")};
  box-shadow: 0 1px 0 #4d4d4d;
  color: ${(p) => (p.$dim ? "#8c8c8c" : "#cfcfcf")};
`;
const Down = ({ c = "#b4b4b4" }: { c?: string }) => <svg width="5" height="5" viewBox="0 0 5 5"><path d="M0 0h5L2.500 5z" fill={c} /></svg>;
const UpDown = () => <svg width="5" height="11" viewBox="0 0 5 11"><path d="M0 3.500h5L2.500 0zM0 7.500h5L2.500 11z" fill="#c2c2c2" /></svg>;

const RecentRow = styled.div`height: 14px; margin: 10px 0 0 7px; display: flex; align-items: center; line-height: 13px;`;
const Chips = styled.div<{ $ml: number; $mt?: number }>`display: flex; margin: ${(p) => p.$mt ?? 0}px 0 0 ${(p) => p.$ml}px; border: solid #000; border-width: 1px 0 1px 1px;`;
const Chip = styled.i<{ $c: string; $none?: boolean }>`
  width: 13px;
  height: 12px;
  border-right: 1px solid #000;
  background: ${(p) => (p.$none ? "linear-gradient(135deg,#fff 45%,#e00 46%,#e00 54%,#fff 55%)" : p.$c)};
`;
const PaletteRow = styled.div`height: 20px; margin: 8px 0 0 7px; display: flex; align-items: center;`;
const Select = styled.div<{ $w: number }>`
  width: ${(p) => p.$w}px;
  height: 20px;
  display: flex;
  align-items: center;
  padding: 0 7px 1px 10px;
  border: 1px solid #272727;
  border-radius: 2px;
  background: linear-gradient(#434343, #353535);
  box-shadow: 0 1px 0 #454545;
  color: #cfcfcf;
`;
const Spring = styled.i`flex: 1;`;
const GridRow = styled.div`display: flex; margin: 6px 0 0 10px; height: 77px;`;
const SwatchGrid = styled.div`
  width: 222px;
  height: 77px;
  display: grid;
  grid-template-columns: repeat(17, 12px);
  grid-auto-rows: 12px;
  gap: 1px;
  padding: 1px;
  overflow: hidden;
  background: #000;
`;
const Swatch = styled.i<{ $c: string }>`background: ${(p) => p.$c};`;
const Thumb = styled.i<{ $h: number; $w: number; $mt: number; $ml: number }>`
  width: ${(p) => p.$w}px;
  height: ${(p) => p.$h}px;
  margin: ${(p) => p.$mt}px 0 0 ${(p) => p.$ml}px;
  border-radius: 4px;
  background: #5d5d5d;
`;
const SearchBox = styled.div`
  width: 211px;
  height: 19px;
  margin: 7px 0 0 8px;
  padding-left: 6px;
  border-radius: 10px;
  border: 1px solid #272727;
  box-shadow: 0 1px 0 #3d3d3d;
  display: flex;
  align-items: center;
`;

const gr = "#02b468";
const green = (n: number) => Array<string>(n).fill(gr);
const swatches = [
  gr, "#5064b0", "#bd3194", "#ae964c", ...green(13),
  ...green(17), ...green(17), ...green(8),
  "#7040aa", "#b8604a", "#ff0000", "#ff4300", "#ffae00", "#e0ff00", "#6cff00", "#00ff08", "#00ff2c",
  "#00ff80", "#00ffd4", "#00ccff", "#1470ff", "#4000ff", "#6200ff", "#ac00f8", "#ff00f8", "#ff00aa", "#ff0052", "#ff0000", "#f75200", "#eea800", "#d2f200", "#6ef500", "#00f812", "#00ff38",
  "#00fa82", "#00f2cc", "#00c4ee", "#146cec", "#3c00ee", "#6000ea", "#a400e8", "#f000e4", "#ff00a2", "#ff0055", "#ee0000", "#e85600", "#e0a200", "#c6e000", "#6ae818", "#00e828", "#00e838",
];

const LayerTools = styled.div`
  height: 29px;
  flex: none;
  display: flex;
  align-items: center;
  padding: 0 0 0 5px;
  background: linear-gradient(#525252, #424242);
  border-bottom: 1px solid #222;
  color: #eee;
`;
const LayerArea = styled.div`display: flex; height: 225px; flex: none;`;
const LayerList = styled.div`width: 249px; height: 225px; overflow: hidden; display: flex; flex-direction: column; justify-content: flex-end;`;
const LayerRow = styled.div<{ $on?: boolean; $last?: boolean }>`
  height: ${(p) => (p.$last ? 32 : 33)}px;
  flex: none;
  display: flex;
  align-items: ${(p) => (p.$last ? "flex-start" : "center")};
  padding: ${(p) => (p.$last ? "2px 5px 0 0" : "0 5px 0 0")};
  border-bottom: 1px solid #1f1f1f;
  background: ${(p) => (p.$on ? "#575757" : "#393939")};
  color: #9d9d9d;
`;
const ArrowCell = styled.div<{ $w: number }>`width: ${(p) => p.$w}px; height: 28px; display: flex; justify-content: flex-end; align-items: center; padding-right: 4px;`;
const CheckCell = styled.div`height: 28px; display: flex; align-items: center; padding-bottom: 2px;`;
const ThumbBox = styled.div`width: 28px; height: 28px; flex: none; border: 1px solid #000; background: #2a2a2a;`;
const LayerText = styled.div`display: flex; margin-left: 5px; line-height: 27px; height: 28px; gap: 3px;`;
const Strong = styled.span`color: #fff; font-weight: 700; display: flex;`;
const Check = ({ on }: { on: boolean }) => (
  <svg width="16" height="18" viewBox="0 0 16 18">
    <rect x="2" y="4.500" width="11" height="11" rx="2.500" fill={on ? "#444" : "none"} stroke="#2c2c2c" />
    {on && <path d="M3.500 9l3 4L13 2.500" fill="none" stroke="#dedede" strokeWidth="2" />}
  </svg>
);
const PlayDot = () => <svg width="14" height="14" viewBox="0 0 14 14"><circle cx="7" cy="7" r="6.800" fill="#272727" /><path d="M4.500 3v8l6.500-4z" fill="#929292" /></svg>;

type Layer = { name?: string; nw?: number; kind: string; kw: number; arrow?: boolean; on?: boolean; off?: boolean; art: React.ReactNode };
const TB = ({ children }: { children?: React.ReactNode }) => <svg width="26" height="26" viewBox="0 0 26 26">{children}</svg>;
const layers: Layer[] = [
  { kind: "(Rectangle)", kw: 53, art: <TB><rect y="10.500" width="26" height="5" fill="#1f4a58" /><rect y="11.500" width="26" height="3" fill="#005b7c" /></TB> },
  { name: "logo", nw: 22, kind: "(Image)", kw: 36, art: <TB><rect y="9" width="26" height="8.500" fill="#eee" /><rect width="10" y="9" height="6" fill="#888" /><path d="M8 9h18v6H12z" fill={TEAL} /><text x="1" y="14.300" fontFamily="Lato" fontWeight="700" fontSize="6.500" textLength="24" lengthAdjust="spacingAndGlyphs" fill="#fff">ITX 360</text></TB> },
  { kind: "(Group)", kw: 36, arrow: true, off: true, art: <TB><rect y="10" width="5" height="6" fill="#0f7390" /><rect x="6" y="10.500" width="20" height="4.500" fill="#24586a" opacity=".8" /><path d="M7 13h18" stroke="#4f8291" strokeDasharray="2 1" /></TB> },
  { kind: "(Group)", kw: 36, arrow: true, art: <TB><rect y="8" width="7" height="10" rx="1" fill="#087292" /><rect x="8" y="11" width="18" height="4" fill="#27454e" /><path d="M9 13h17" stroke="#3d6875" strokeDasharray="2 1" /></TB> },
  { kind: "(Group)", kw: 36, art: <TB /> },
  { name: "Home_profile", nw: 68, kind: "(Artboard)", kw: 50, arrow: true, on: true, art: <TB><path d="M0 5h26v6H0zM0 18h26v3.500H0z" fill="#8b8b8b" /><path d="M7 5h17v6H7zM0 13h8v4H0z" fill="#1d7089" /><path d="M8 5.500h7v3H8zM16 13h10v3H16z" fill="#a9bcc3" /><path d="M20 12h6v2h-6zM23 18h3v3h-3z" fill="#086080" /></TB> },
  { name: "Langing", nw: 41, kind: "(Artboard)", kw: 50, arrow: true, on: true, art: <TB><rect x="8" y="10.500" width="11" height="5" rx="2" fill="#c8c8c8" /><path d="M11 11h7v3h-5z" fill="#3c7f92" /></TB> },
];

const LayerFoot = styled.div`
  height: 24px;
  flex: none;
  display: flex;
  align-items: center;
  padding-left: 4px;
  background: linear-gradient(#525252, #3e3e3e);
  border-bottom: 2px solid #2b2b2b;
`;
const StackBtn = styled.div`width: 21px; height: 20px; margin-right: 58px; background: #292929; display: flex; align-items: center; justify-content: center;`;
const Gap = styled.i<{ $w: number }>`width: ${(p) => p.$w}px; flex: none;`;
const Fx = styled.span`font: italic 700 15px/16px "Liberation Serif", serif; color: #ececec; padding-bottom: 2px;`;

const TransformBody = styled.div`height: 100px; flex: none; background: #404040; display: flex; padding: 10px 0 0 17px; color: #eee;`;
const FieldCol = styled.div<{ $ml: number }>`margin-left: ${(p) => p.$ml}px; width: 74px; display: flex; flex-direction: column;`;
const FieldRow = styled.div<{ $mt: number }>`display: flex; align-items: center; justify-content: flex-end; gap: 3px; margin-top: ${(p) => p.$mt}px;`;

const PaletteIcon = () => (
  <svg width="15" height="15" viewBox="0 0 15 15"><path d="M8 .5C3.500.5.5 4 .5 8s3 6.500 6 6.500c3.500 0 2.500-1.500 2-3s.5-2.500 2-2.500 4 .3 4-2C14.500 3 12 .5 8 .5z" fill="#e8e8e8" />{[[5, 3.500], [9.500, 3], [3, 7], [4, 11], [12, 5.500]].map(([x, y]) => <circle key={x} cx={x} cy={y} r="1.100" fill="#8b8b8b" />)}<circle cx="7.500" cy="7.500" r="1.400" fill="#333" /></svg>
);

function Panels() {
  return (
    <Side>
      <Tabs>
        <Grip $r={11} /><Fit w={32}>Colour</Fit><Gap $w={6} />
        <ActiveTab $w={50}><Fit w={44}>Swatches</Fit></ActiveTab>
        <Fit w={31} ml={4}>Stroke</Fit><TabSep $l={4} $r={4} /><Fit w={37}>Brushes</Fit>
        <Gap $w={57} />
        <svg width="14" height="20" viewBox="0 0 14 20"><path d="M0 5.500h9M0 8h9M0 10.500h9M0 13h9" stroke="#ddd" strokeWidth="1.200" /><path d="M9.500 12h4L11.500 14.500z" fill="#ddd" /></svg>
      </Tabs>
      <ColourHead>
        <svg width="80" height="42" viewBox="0 0 80 42">
          <circle cx="14" cy="15" r="10" fill="none" stroke="#777" strokeWidth="6" />
          <circle cx="14" cy="15" r="10" fill="none" stroke="#fff" strokeWidth="4.400" />
          <path d="M20 6l4 4.500M2.500 19l4 3" stroke="#e44" strokeWidth="1.400" />
          <circle cx="24" cy="26" r="12.500" fill="#808080" stroke="#3a3a3a" strokeWidth="1.500" />
          <circle cx="24" cy="26" r="13.300" fill="none" stroke="#777" strokeWidth=".6" />
          <circle cx="6.500" cy="33" r="5" fill="#fff" stroke="#111" /><path d="M3 36.500l7-7" stroke="#e00" strokeWidth="1.500" />
          <path d="M27 6q7-1 7.500 7M29 3l-3 3 3 3M31.500 11l3 3 2.500-3" fill="none" stroke="#b2b2b2" strokeWidth="1.100" />
          <path d="M48 18l2-4 6-6 2 2-6 6z" fill="#aaa" /><path d="M54 5.500l6 6" stroke="#8a6114" strokeWidth="2" /><path d="M56 6q3-5 6-3 2.500 2-2 6z" fill="#d89b22" />
          <circle cx="73.500" cy="11" r="6.500" fill="#808080" stroke="#2e2e2e" /><circle cx="73.500" cy="11" r="7.200" fill="none" stroke="#5d5d5d" strokeWidth=".7" />
        </svg>
        <Fit w={39} ml={59}>Opacity:</Fit>
        <Field $w={61} $h={22} $ml={8}><Fit w={28}>100 %</Fit><Down /></Field>
      </ColourHead>
      <RecentRow>
        <Fit w={35}>Recent:</Fit>
        <Chips $ml={7}><Chip $c="" $none />{["#bfbfbf", "#fff", "#808080", TEAL, "#303030", "#303030", "#303030", "#303030", "#303030"].map((c, i) => <Chip key={i} $c={c} />)}</Chips>
      </RecentRow>
      <PaletteRow>
        <Select $w={139}>
          <svg width="13" height="12" viewBox="0 0 13 12"><path d="M6.500 2L11 10H2.500z" fill="none" stroke="#0a0a0a" strokeWidth="2.800" strokeLinejoin="round" /></svg>
          <Fit w={37} ml={5}>Colours</Fit><Spring /><UpDown />
        </Select>
        <Gap $w={8} /><PaletteIcon />
        <Chips $ml={33} $mt={4}><Chip $c="" $none /><Chip $c="#000" /><Chip $c="#808080" /><Chip $c="#fff" /></Chips>
      </PaletteRow>
      <GridRow>
        <SwatchGrid>{swatches.map((c, i) => <Swatch key={i} $c={c} />)}</SwatchGrid>
        <Thumb $w={8} $h={31} $mt={2} $ml={13} />
      </GridRow>
      <SearchBox><svg width="10" height="10" viewBox="0 0 10 10" fill="none" stroke="#8c8c8c"><circle cx="4" cy="4" r="3.200" strokeWidth="1.200" /><path d="M6.500 6.500L9.500 9.500" strokeWidth="1.600" /></svg></SearchBox>

      <Tabs $mt={13} $pt={2}>
        <Grip $r={8} />
        <ActiveTab $w={37}><Fit w={30}>Layers</Fit></ActiveTab>
        <Fit w={31} ml={5}>Effects</Fit><TabSep $l={4} $r={4} /><Fit w={27}>Styles</Fit><TabSep $l={4} $r={4} /><Fit w={51}>Text Styles</Fit>
      </Tabs>
      <LayerTools>
        <Fit w={40}>Opacity:</Fit>
        <Field $w={49} $dim $ml={14}><Fit w={28}>100 %</Fit><Down c="#858585" /></Field>
        <Field $w={109} $dim $ml={3}><Fit w={35}>Normal</Fit><UpDown /></Field>
        <Gap $w={4} />
        <svg width="12" height="12" viewBox="0 0 12 12"><circle cx="6" cy="6" r="3.300" fill="none" stroke="#c4c4c4" strokeWidth="2.400" /><circle cx="6" cy="6" r="5" fill="none" stroke="#c4c4c4" strokeWidth="2" strokeDasharray="2 1.930" /></svg>
        <Gap $w={9} />
        <svg width="9" height="13" viewBox="0 0 9 13"><path d="M2 6V3.500a2.500 2.500 0 0 1 5 0V6" fill="none" stroke="#aaa" strokeWidth="1.300" /><rect x=".3" y="6" width="8.400" height="6.500" rx="1" fill="#c8c8c8" /></svg>
      </LayerTools>
      <LayerArea>
        <LayerList>
          {layers.map((l, i) => (
            <LayerRow key={i} $on={l.on} $last={i === 6}>
              <ArrowCell $w={l.on ? 21 : 31}>{l.arrow && <PlayDot />}</ArrowCell>
              <ThumbBox>{l.art}</ThumbBox>
              <LayerText>{l.name && <Strong><Fit w={l.nw!}>{l.name}</Fit></Strong>}<Fit w={l.kw}>{l.kind}</Fit></LayerText>
              <Spring /><CheckCell><Check on={!l.off} /></CheckCell>
            </LayerRow>
          ))}
        </LayerList>
        <Thumb $w={7} $h={86} $mt={137} $ml={4} />
      </LayerArea>
      <LayerFoot>
        <StackBtn><svg width="17" height="17" viewBox="0 0 17 17" fill="none" stroke="#dcdcdc" strokeWidth="1.200"><path d="M1 4.500L8.500 1 16 4.500 8.500 8zM1 7.500L8.500 11 16 7.500M1 10L8.500 13.500 16 10M1 12.500L8.500 16 16 12.500" /></svg></StackBtn>
        <svg width="14" height="12" viewBox="0 0 14 12"><rect width="14" height="12" fill="#d4d4d4" /><circle cx="7" cy="6" r="4" fill="#333" /></svg>
        <Gap $w={10} />
        <svg width="12" height="12" viewBox="0 0 12 12"><circle cx="6" cy="6" r="5.300" fill="#e4e4e4" stroke="#c8c8c8" /><path d="M2.300 9.700A5.200 5.200 0 0 1 9.700 2.300z" fill="#444" /></svg>
        <Gap $w={8} /><Fx><Fit w={14}>fx</Fit></Fx><Gap $w={58} />
        <svg width="11" height="14" viewBox="0 0 11 14"><path d="M.5.500h6l4 4v9H.500z" fill="#d0d0d0" /><path d="M6.500.500v4h4" fill="#888" /></svg>
        <Gap $w={11} />
        <svg width="13" height="14" viewBox="0 0 13 14"><path d="M3 1h5l4 4v8.500H3z" fill="#777" /><path d="M3.500 4h8M3.500 7h8M3.500 10h8M3.500 13h8" stroke="#ddd" strokeWidth="1.500" strokeDasharray="1.500 1.500" /><path d="M5 5.500h7M5 8.500h7M5 11.500h7" stroke="#ddd" strokeWidth="1.500" strokeDasharray="1.500 1.500" /><path d="M0 1h4M1 1v6" stroke="#ccc" strokeDasharray="1.500 1" /></svg>
        <Gap $w={11} />
        <svg width="10" height="14" viewBox="0 0 10 14" fill="none" stroke="#d4d4d4"><path d="M0 2.500h10M3.500 2V.7h3V2" strokeWidth="1.200" /><path d="M1.200 4.500h7.600V13H1.200zM3.500 6v6M5 6v6M6.500 6v6" /></svg>
      </LayerFoot>
      <Tabs $pt={2}>
        <Grip $r={7} />
        <ActiveTab $w={56}><Fit w={49}>Transform</Fit></ActiveTab>
        <Fit w={34} ml={6}>History</Fit><TabSep $l={4} $r={3} /><Fit w={47}>Navigator</Fit>
      </Tabs>
      <TransformBody>
        <svg width="39" height="61" viewBox="0 -10 39 61"><g fill="#6c6c6c"><rect x="2.500" y="2.500" width="34" height="34" />{[0, 17, 34].map((y) => [0, 17, 34].map((x) => <rect key={x + "." + y} x={x} y={y} width="5" height="5" rx="1" fill="#707070" />))}</g></svg>
        <FieldCol $ml={17}>
          <FieldRow $mt={0}><Fit w={9}>X:</Fit><Field $w={61} $h={19} $dim><Fit w={21}>0 px</Fit></Field></FieldRow>
          <FieldRow $mt={3}><Fit w={9}>Y:</Fit><Field $w={61} $h={19} $dim><Fit w={21}>0 px</Fit></Field></FieldRow>
          <FieldRow $mt={13}><Fit w={9}>R:</Fit><Field $w={61} $h={19} $dim><Fit w={13}>0 °</Fit><Down c="#858585" /></Field></FieldRow>
        </FieldCol>
        <FieldCol $ml={10}>
          <FieldRow $mt={0}><Fit w={12}>W:</Fit><Field $w={59} $h={19} $dim><Fit w={21}>0 px</Fit></Field></FieldRow>
          <FieldRow $mt={3}><Fit w={10}>H:</Fit><Field $w={61} $h={19} $dim><Fit w={21}>0 px</Fit></Field></FieldRow>
          <FieldRow $mt={13}><Fit w={8}>S:</Fit><Field $w={61} $h={19} $dim><Fit w={13}>0 °</Fit><Down c="#858585" /></Field></FieldRow>
        </FieldCol>
        <Gap $w={11} />
        <svg width="5" height="42" viewBox="0 0 5 42" fill="none" stroke="#b5b5b5"><rect x=".7" y="14" width="3.600" height="5" rx="1.800" /><rect x=".7" y="22" width="3.600" height="5" rx="1.800" /><path d="M2.500 18v5" strokeWidth="1.400" /></svg>
      </TransformBody>
    </Side>
  );
}

const Status = styled.div`height: 20px; flex: none; padding-left: 20px; line-height: 20px; color: #b4b4b4; display: flex; b { color: #fff; }`;

/* ---------- desktop below the window ---------- */
const Desktop = styled.div`
  position: relative;
  flex: 1;
  background:
    linear-gradient(rgba(10,14,14,.62), rgba(20,26,26,.25) 38px, transparent 62px),
    linear-gradient(90deg, #11171a 0 36%, #6b7c7e 43%, #859091 60%, #a2aaaa 80%, #dde2df 90%, #d0d6d2);
`;
const Wallpaper = styled.svg`position: absolute; left: 0; top: 18px;`;
const EditorBar = styled.div`
  position: relative;
  height: 18px;
  margin-left: 8px;
  padding-left: 10px;
  overflow: hidden;
  display: flex;
  background: #13151a;
  border-bottom-left-radius: 5px;
  box-shadow: inset 0 3px 4px #0b0c0f;
  color: #4d525c;
  font-size: 12.500px;
  line-height: 7px;
`;
const EdTab = styled.div<{ $w: number; $on?: boolean }>`
  width: ${(p) => p.$w}px;
  height: 15px;
  display: flex;
  justify-content: center;
  border: 1px solid #0a0b0e;
  border-top: 0;
  background: ${(p) => (p.$on ? "#1b1f27" : "#14161b")};
  color: ${(p) => (p.$on ? "#7b8089" : "#3d4047")};
`;
const Tint = styled.span<{ $c: string }>`color: ${(p) => p.$c}; display: flex;`;

const Dock = styled.div`position: relative; height: 70px; display: flex; padding-left: 268px;`;
const Shelf = styled.svg`position: absolute; left: 236px; top: 20px;`;
const DockItem = styled.div`position: relative; width: 55px; height: 70px; flex: none;`;
const DockGap = styled.div`width: 28px; flex: none; position: relative;`;
const Glow = styled.i`
  position: absolute;
  left: 21px;
  bottom: 0;
  width: 12px;
  height: 3px;
  border-radius: 2px 2px 0 0;
  background: #f4fcff;
  box-shadow: 0 0 3px 1px #9ad8f6;
`;
const Badge = styled.div`
  position: absolute;
  left: 34px;
  top: 3px;
  width: 17px;
  height: 17px;
  border-radius: 50%;
  border: 1.500px solid #f4e4e4;
  background: radial-gradient(ellipse at 50% 10%, #ff8080, #e8141c 55%, #cf0410);
  color: #fff;
  font: 700 11px/14px "Noto Sans", sans-serif;
  text-align: center;
`;
const DI = ({ children }: { children: React.ReactNode }) => <svg width="55" height="70" viewBox="0 0 55 70">{children}</svg>;

const rocket = (
  <g>
    <path d="M17 32q-9 6-6 14M38 32q9 6 6 14" fill="none" stroke="#9c9c44" strokeWidth="1.500" />
    <path d="M10 49q0-7 6-8l3 3q-3 1-3 3l3 1-3 3zM45 49q0-7-6-8l-3 3q3 1 3 3l-3 1 3 3z" fill="#12a650" />
    <path d="M22 42h11l-5.500 7z" fill="#d9b64a" /><path d="M27.500 5Q38 16 37.500 31q-1 8-5.500 12h-9q-5-4-5.500-12Q17 16 27.500 5z" fill="#10b457" /><path d="M27.500 5Q38 16 37.500 31q-1 8-5.500 12h-4z" fill="#0fab53" />
    <circle cx="27.500" cy="25" r="5" fill="#8ee8b5" /><circle cx="27.500" cy="25" r="3" fill="#35c576" /><path d="M24 35h7M25 37.500h5" stroke="#0a6e36" />
  </g>
);
const dockA: { art: React.ReactNode; glow?: boolean; badge?: boolean }[] = [
  { glow: true, art: <DI><defs><linearGradient id="fi" x1="0" y1="0" x2="0" y2="1"><stop offset="0" stopColor="#d4e4fa" /><stop offset="1" stopColor="#4f78c8" /></linearGradient></defs><rect x="6" y="10" width="43" height="37" rx="1" fill="url(#fi)" /><path d="M30 10h19v37H30q-1-8-1-12h-4q0-14 5-25z" fill="#e7eefb" opacity=".55" /><path d="M33 6Q24 18 23.500 34h7Q30 44 32 51" fill="none" stroke="#1a2740" strokeWidth="1.600" /><path d="M17 17v6M39 17v6" stroke="#1a2740" strokeWidth="2" /><path d="M13 35q14 9 29 0" fill="none" stroke="#1a2740" strokeWidth="1.500" /></DI> },
  { art: <DI><path d="M8 12l32-5 10 41-34 6z" fill="#ded36d" /><path d="M8.500 14l32-5 9 38-33 6z" fill="#fbf39a" /><path d="M7 10l34-5 1.500 6-34 5z" fill="#5a2e1e" /><path d="M13 22l16-2M13 25l20-2.500M14 28l18-2M15 31l12-1.500M17 37l20-3M17 40l22-3M18 43l18-2.500M19 46l12-1.500" stroke="#80764a" strokeWidth=".8" strokeDasharray="3 1 5 1" /></DI> },
  { glow: true, art: <DI><circle cx="27.500" cy="30" r="24" fill="#fccd2c" /><path d="M27.500 30l-20.800-12a24 24 0 0 0 19 36z" fill="#18a05a" /><path d="M27.500 19h20.800a24 24 0 0 1-22.600 35L37 35z" fill="#fccd2c" /><path d="M27.500 30L6.700 18A24 24 0 0 1 48.300 18.500H27z" fill="#db3a2c" /><path d="M18 36L6.700 18l3 0L20 28z" fill="#18a05a" /><circle cx="27.500" cy="30" r="11" fill="#f6f6f6" /><circle cx="27.500" cy="30" r="8.800" fill="#4687f4" /></DI> },
  { glow: true, art: <DI><rect x="3" y="9" width="49" height="42" rx="1.500" fill="#a8aaa9" /><rect x="6" y="12" width="43" height="35" fill="#161616" /><path d="M6 47L49 28v19z" fill="#2b2b2b" /><text x="8" y="24" fontFamily="DejaVu Sans Mono" fontWeight="700" fontSize="11.500" textLength="16" fill="#eee">{">_"}</text></DI> },
  { glow: true, art: <DI><defs><linearGradient id="oc" x1="0" y1="0" x2="0" y2="1"><stop offset=".4" stopColor="#52106e" /><stop offset="1" stopColor="#96229c" /></linearGradient></defs><circle cx="27.500" cy="30" r="23.800" fill="#ecebf5" /><path d="M14 14q-.3-2.500 2-1.500l6 3.500q5.500-1.500 11 0l6-3.500q2.300-1 2 1.500v6q3.500 4.500 1.500 10-2.500 6.500-10 8 2 2 2 5.500v10q-7 2.500-14 0v-6q-6 1.500-8.500-3Q10.500 41 8 40.500q4-1.500 7 2.500 2.500 3.500 6 1.500 0-5 1-6-7.500-1.500-9.500-8-2-6 1.500-10.500z" fill="url(#oc)" /></DI> },
  { glow: true, art: <DI><path d="M22 6h9l23 41-4 5H6l-4-6z" fill="#123f76" /><path d="M26.500 8l21 37H28L20 32z" fill="#16c8e4" /><path d="M26.500 8L38 28 21 45H9z" fill="#1b8ce6" /><path d="M27 13L42 38H29l-8-6z" fill="#14b4ea" /><path d="M21 32l12 11H15z" fill="#27d6c6" /><path d="M18 32h17M21 32l8 13M25 18l-5 27M10 44h36" fill="none" stroke="#0c2c58" /><path d="M5 45h45l-3 4H8z" fill="#1b62c8" /></DI> },
  { glow: true, art: <DI><circle cx="27.500" cy="29.500" r="22.500" fill="#34bf84" stroke="#d8f2e4" strokeWidth="1.300" /><g fill="none" stroke="#e7fff3" strokeWidth="1.400" transform="rotate(-12 27.500 29.500)"><ellipse cx="27.500" cy="29.500" rx="5" ry="14" /><ellipse cx="27.500" cy="29.500" rx="5" ry="14" transform="rotate(60 27.500 29.500)" /><ellipse cx="27.500" cy="29.500" rx="5" ry="14" transform="rotate(-60 27.500 29.500)" /></g><circle cx="27.500" cy="29.500" r="2.200" fill="#fff" /></DI> },
  { glow: true, badge: true, art: <DI><circle cx="18" cy="43" r="11" fill="none" stroke="#8a9aa8" opacity=".5" /><path d="M5 13l34-6 9 36-35 9z" fill="#f4f4f2" stroke="#f4f4f2" strokeWidth="2.500" strokeDasharray="2 2" /><path d="M9 16l28-5 7 30-27 7z" fill="#7da6dc" /><path d="M18 15q4-2 8 0 4 5 5 12l6 9-6-1q-3 6-12 7l-2-3q5-3 7-8-5-8-6-16z" fill="#4c3826" /><path d="M21 15l4 13M24 16l3 11M19 39l9-6" stroke="#a08058" strokeWidth="1.200" /><path d="M28 24l4-1 1 4-3 1z" fill="#eee" /></DI> },
  { glow: true, art: <DI><rect x="5" y="10" width="45" height="40" rx="2" fill="#202020" stroke="#6b6b6b" /><rect x="7" y="12" width="41" height="20" fill="#2b2b2b" opacity=".6" /><text x="9" y="25" fontFamily="DejaVu Sans Mono" fontWeight="700" fontSize="13" fill="#22d322">$</text><rect x="18" y="14" width="6" height="12" fill="#18a818" /></DI> },
  { glow: true, art: <DI>{rocket}</DI> },
  { glow: true, badge: true, art: <DI><circle cx="27.500" cy="29.500" r="26" fill="#fbfbfb" /><g transform="translate(12 18.500)"><SMark $w={31} $h={23} color="#f03a20" /></g></DI> },
  { glow: true, art: <DI><defs><linearGradient id="it" x1="0" y1="0" x2="0" y2="1"><stop offset="0" stopColor="#f8506a" /><stop offset=".5" stopColor="#b85ae0" /><stop offset="1" stopColor="#28b8f4" /></linearGradient><linearGradient id="nt" gradientUnits="userSpaceOnUse" x1="0" y1="14" x2="0" y2="44"><stop offset="0" stopColor="#f2466c" /><stop offset="1" stopColor="#6a5ae8" /></linearGradient></defs><circle cx="27.500" cy="30" r="24" fill="url(#it)" /><circle cx="27.500" cy="30" r="21.500" fill="#f8f6fb" /><path d="M20 18l18-4v24h-3V20l-12 3v18h-3z" fill="url(#nt)" /><ellipse cx="18.500" cy="41.500" rx="4.500" ry="3.800" fill="#6a5ae8" /><ellipse cx="34" cy="38" rx="4.500" ry="3.800" fill="#a04fe0" /></DI> },
];
const dockB: React.ReactNode[] = [
  <DI><path d="M12 6h15l12 10v6H12z" fill="#e8e8e8" /><path d="M24 6v14M28 7v13" stroke="#444" strokeWidth="2" /><path d="M30 6l10 12H30z" fill="#fafafa" stroke="#aaa" strokeWidth=".6" /><path d="M4 20l4-7h5v5h28v-5h4l5 7v30H4z" fill="#6fa6c8" /><path d="M3.500 21h47v28H4z" fill="#8dbcd8" /><path d="M4 48h46.500v2H4z" fill="#4a7fa2" /></DI>,
  <DI><rect x="2" y="10" width="51" height="39" fill="#f6f6f6" stroke="#bbb" strokeWidth=".6" /><path d="M13 16h31" stroke="#f0d8a0" strokeWidth="2" /><path d="M5 15h3M5 20h3M5 25h3" stroke="#e8b0a8" /><path d="M20 20h7M20 23h3M20 26h3M20 30h9" stroke="#bbb" /><circle cx="43" cy="46" r="9.500" fill="#fdfdfd" /><g transform="translate(37 41.500)"><SMark $w={12} $h={9} color="#f03a20" /></g></DI>,
  <DI><rect x="2" y="15" width="50" height="29" fill="#eee" /><rect x="12" y="21" width="40" height="23" fill="#3b4144" /><path d="M15 25h5M15 28h9M15 33h12M15 37h7M15 41h11" stroke="#5d7355" /><g transform="translate(31 34) scale(.44)">{rocket}</g></DI>,
  <DI><path d="M9 9h38l-5 43q-14 5-28 0z" fill="#55575b" /><path d="M10 12l35 36M16 10l28 30M9 20l28 32M24 10l21 22M11 32l18 20M45 12L13 46M40 10L11 38M46 22L20 52M32 10L10 28M44 34L30 52" stroke="#a2a4a8" strokeWidth=".8" /><path d="M12 14l5-6 7 2 5-3 7 3 7 3-4 6H16z" fill="#ededf0" /><ellipse cx="28" cy="11" rx="19.500" ry="5" fill="none" stroke="#c9cacd" strokeWidth="2.500" /><path d="M14 48q14 5 28 0v4q-14 5-28 0z" fill="#cfd0d4" /></DI>,
];

function rnd(seed: number) {
  let s = seed;
  return () => ((s = (s * 16807) % 2147483647) / 2147483647);
}
const specks = (() => {
  const r = rnd(77);
  const cols = ["#a5844e", "#b8743e", "#3f8088", "#5d7340", "#7d7a70", "#2d6878", "#8a8778", "#54483a"];
  return Array.from({ length: 300 }, () => {
    const x = 60 + r() * 210, band = 3 + (x - 60) * 0.17;
    const s = r() * r();
    return { x, y: band + (r() - 0.300) * 28, w: 0.700 + s * 3.600, h: 0.400 + s * 1, a: -35 + r() * 60, c: cols[Math.floor(r() * 8)], o: 0.200 + r() * 0.500 };
  });
})();
const sparks = (() => {
  const r = rnd(9);
  return Array.from({ length: 90 }, () => {
    const x = r() * 50;
    return { x, y: 37 + x * 0.480 + (r() - 0.500) * 13, w: 0.800 + r() * 3, c: ["#d87832", "#d8a868", "#3a96a4", "#b84e28"][Math.floor(r() * 4)] };
  });
})();

function Bottom() {
  return (
    <Desktop>
      <Wallpaper width="570" height="70" viewBox="0 0 570 70">
        <defs>
          <filter id="rock" x="0" y="0" width="100%" height="100%" colorInterpolationFilters="sRGB"><feTurbulence type="fractalNoise" baseFrequency=".05 .09" numOctaves="5" seed="8" /><feColorMatrix values=".2 0 0 0 -.065  .22 0 0 0 -.06  .23 0 0 0 -.055  0 0 0 0 1" /></filter>
          <linearGradient id="fade"><stop offset=".45" stopColor="#05080a" stopOpacity="0" /><stop offset=".6" stopColor="#080c0f" stopOpacity=".75" /></linearGradient>
          <clipPath id="dk"><path d="M0 0H536Q552 10 566 30L570 70H0z" /></clipPath>
        </defs>
        <g clipPath="url(#dk)">
          <rect width="570" height="70" fill="#0a0f12" /><rect width="570" height="70" filter="url(#rock)" />
          {specks.map((s, i) => <ellipse key={i} cx={s.x} cy={s.y} rx={s.w} ry={s.h} transform={`rotate(${s.a} ${s.x} ${s.y})`} fill={s.c} opacity={s.o} />)}
          {sparks.map((s, i) => <ellipse key={i} cx={s.x} cy={s.y} rx={s.w / 1.600} ry=".8" fill={s.c} opacity=".75" />)}
          <rect width="570" height="70" fill="url(#fade)" />
        </g>
      </Wallpaper>
      <EditorBar>
        <EdTab $w={48} $on><Fit w={35}>File  0</Fit></EdTab>
        <EdTab $w={69}><Fit w={54}>Project  0</Fit></EdTab>
        <Gap $w={8} />
        <svg width="12" height="10" viewBox="0 0 12 10"><path d="M1 3.500l3.500 3.500L11-1" fill="none" stroke="#176a48" strokeWidth="2.500" /></svg>
        <Tint $c="#176a48"><Fit w={54} ml={4}>No Issues</Fit></Tint>
        <Tint $c="#666b75"><Fit w={35} ml={7}>app.js</Fit></Tint>
        <Fit w={33} ml={18}>56:12</Fit>
        <Fit w={12} ml={725}>LF</Fit><Fit w={36} ml={19}>UTF-8</Fit><Fit w={115} ml={18}>Babel ES6 JavaScript</Fit>
        <Gap $w={19} />
        <svg width="9" height="12" viewBox="0 0 9 12" fill="none" stroke="#4d525c" strokeWidth="1.300"><path d="M2 0v8M2 6q5 0 5-6" /><circle cx="2" cy="9.500" r="1.500" /></svg>
        <Fit w={38} ml={9}>master</Fit>
        <Gap $w={18} />
        <svg width="16" height="11" viewBox="0 0 16 11" fill="none" stroke="#2b4680" strokeWidth="1.200"><path d="M1-2v8L8 9l7-3V-2M8 0v9" /></svg>
        <Tint $c="#3a62ad"><Fit w={57} ml={5}>2 updates</Fit></Tint>
        <Gap $w={18} />
        <svg width="17" height="13" viewBox="0 0 17 13"><path d="M0-1l3 3V-1h5v4l4-4h4v5l-4 1v5l-4 2H4L1 5z" fill="#0e64b0" /></svg>
      </EditorBar>
      <Dock>
        <Shelf width="970" height="50" viewBox="0 0 970 50">
          <defs>
            <linearGradient id="sh" x1="0" y1="0" x2="0" y2="1"><stop offset="0" stopColor="#9a9f9f" /><stop offset=".5" stopColor="#b4b7b7" /><stop offset="1" stopColor="#d2d4d4" /></linearGradient>
            <filter id="soft" x="-20%" y="-50%" width="140%" height="200%"><feGaussianBlur stdDeviation="4" /></filter>
          </defs>
          <path d="M30 10H936l26 39H5z" fill="#000" opacity=".35" filter="url(#soft)" />
          <path d="M31 7H936q3 0 4 2l20 36H7.500L27 9.500Q28 7 31 7z" fill="url(#sh)" opacity=".93" />
          <path d="M7.500 45h953v2q0 3-3 3H10q-3 0-2.500-5z" fill="#8d9191" />
          <path d="M8 46h953" stroke="#f6f7f7" strokeWidth="1.600" />
          <path d="M699.500 11l11 31" stroke="#7f8383" strokeWidth="1.300" /><path d="M701 11l11 31" stroke="#d8dada" strokeWidth=".8" />
        </Shelf>
        {dockA.map((d, i) => <DockItem key={i}>{d.glow && <Glow />}{d.art}{d.badge && <Badge>4</Badge>}</DockItem>)}
        <DockGap />
        {dockB.map((a, i) => <DockItem key={i}>{a}</DockItem>)}
      </Dock>
    </Desktop>
  );
}

export default function App() {
  return (
    <Screen>
      <GlobalStyle />
      <Menus />
      <Window>
        <TitleBar>
          <Lights><Light $c="#f0434c" $d="#7c1018" /><Light $c="#f4a63a" $d="#8a4c08" /><Light $c="#74cc55" $d="#256a18" /></Lights>
          <TitleText><Fit w={186}>Affinity Designer – Untitled (22.5%)</Fit></TitleText>
          <FullScreen><svg width="13" height="15" viewBox="0 0 13 15" fill="none" stroke="#151515" strokeWidth="1.400"><path d="M7 1h5v5M12 1L7.500 5.500M6 14H1V9M1 14l4.500-4.500" /><path d="M1 15h6M12.800 1v6" stroke="#858585" strokeWidth=".7" /></svg></FullScreen>
        </TitleBar>
        <Tools />
        <ContextBar>
          <Fit w={60}>No Selection</Fit><VLine $l={6} $h={11} />
          <ContextBtn $w={126} $ml={6}><Fit w={90}>Document Setup...</Fit></ContextBtn>
          <ContextBtn $w={102} $ml={2}><Fit w={65}>Preferences...</Fit></ContextBtn>
        </ContextBar>
        <Work>
          <ToolCol>{toolIcons.map((ic, i) => <Tool key={i} $on={i === 0}>{ic}</Tool>)}</ToolCol>
          <CanvasCol>
            <HRow><RulerUnit>px</RulerUnit><HRuler /></HRow>
            <VRow><VRuler><VRulerMarks /></VRuler><Boards /></VRow>
          </CanvasCol>
          <Panels />
        </Work>
        <Status><b><Fit w={25}>Drag</Fit></b><Fit w={90} ml={3}>to marquee select.</Fit><b><Fit w={26} ml={3}>Click</Fit></b><Fit w={101} ml={3}>an object to select it.</Fit></Status>
      </Window>
      <Bottom />
    </Screen>
  );
}
